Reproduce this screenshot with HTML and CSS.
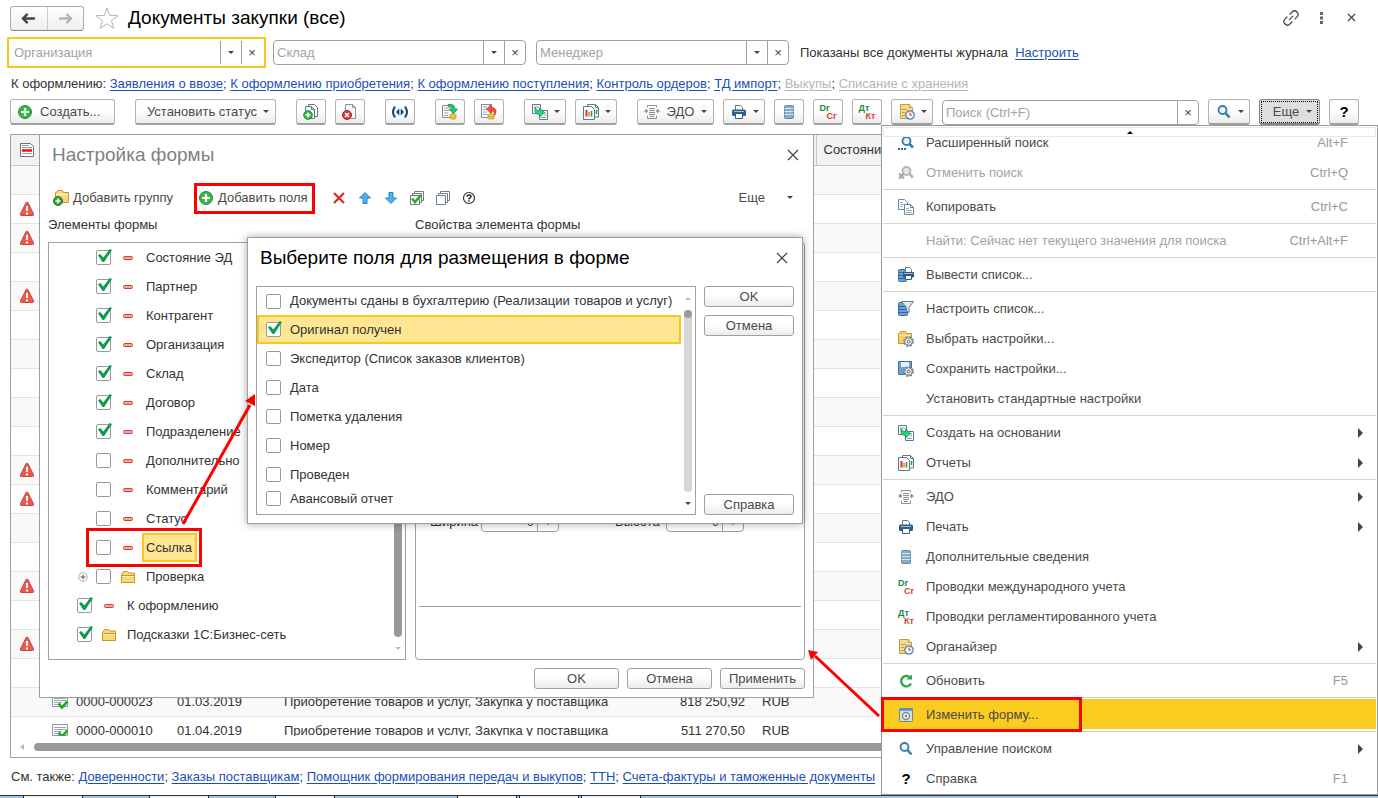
FILE: index.html
```html
<!DOCTYPE html>
<html lang="ru">
<head>
  <meta charset="UTF-8">
  <title>Документы закупки (все)</title>
  <link rel="stylesheet" href="styles.css">
</head>
<body>
  <!-- icons -->
  <svg class="sprite" aria-hidden="true">
    <symbol id="i-add" viewBox="0 0 16 16">
      <circle cx="8" cy="8" r="6.5" fill="#3cb54a" stroke="#23883a"/>
      <path d="M8 4v8M4 8h8" stroke="#fff" stroke-width="2.2"/>
    </symbol>
    <symbol id="i-page-add" viewBox="0 0 16 16">
      <path d="M5.5 .5h6l3 3v9h-9z" fill="#fff" stroke="#60788c"/>
      <path d="M2.5 2.5h6l3 3v9h-9z" fill="#f3f6f8" stroke="#60788c"/>
      <path d="M8.5 2.5v3h3" fill="none" stroke="#60788c"/>
      <circle cx="5" cy="11" r="4.3" fill="#3cb54a" stroke="#23883a"/>
      <path d="M5 8.5v5M2.5 11h5" stroke="#fff" stroke-width="1.5"/>
    </symbol>
    <symbol id="i-page-del" viewBox="0 0 16 16">
      <path d="M3.5 .5h7l3 3v11h-10z" fill="#f6f8fa" stroke="#8796a3"/>
      <path d="M10.5 .5v3h3" fill="none" stroke="#8796a3"/>
      <circle cx="5" cy="11" r="4.5" fill="#d93a3a" stroke="#a82222"/>
      <path d="M3 9l4 4M7 9l-4 4" stroke="#fff" stroke-width="1.5"/>
    </symbol>
    <symbol id="i-code" viewBox="0 0 16 16">
      <path d="M3 2.5Q-1 8 3 13.5M13 2.5Q17 8 13 13.5" fill="none" stroke="#12466e" stroke-width="2"/>
      <path d="M7.3 4.5v7L4 8zM8.7 4.5v7L12 8z" fill="#12466e"/>
    </symbol>
    <symbol id="i-post" viewBox="0 0 16 16">
      <path d="M.5 1.5h10v12H.5z" fill="#fff" stroke="#7d8d9a"/>
      <path d="M2 4h6M2 6.5h6M2 9h4M2 11.5h4" stroke="#8fa1ae"/>
      <path d="M6 .5q7-1 7 4.5h2.5l-4 5-4-5H10q0-2.5-4-2.5z" fill="#27c36e" stroke="#139150" stroke-width=".7"/>
      <path d="M8 10.5q3.5-1.5 6 0v4q-3 1.5-6 0z" fill="#f3cb45" stroke="#c79a1c" stroke-width=".7"/>
      <path d="M8 12.5q3 1.2 6 0" fill="none" stroke="#c79a1c" stroke-width=".7"/>
    </symbol>
    <symbol id="i-unpost" viewBox="0 0 16 16">
      <path d="M.5 .5h10v13H.5z" fill="#fff" stroke="#7d8d9a"/>
      <path d="M2 3h4M2 5.5h4M2 8h4M2 10.5h5" stroke="#8fa1ae"/>
      <path d="M10 .5L5.5 5 10 9.5V7q4-.5 3.5 4.500 4.500-7-3.500-8.500z" fill="#f4523c" stroke="#c4301f" stroke-width=".7"/>
      <path d="M7 10.5q3.5-1.5 6 0v4q-3 1.5-6 0z" fill="#f3cb45" stroke="#c79a1c" stroke-width=".7"/>
      <path d="M7 12.5q3 1.2 6 0" fill="none" stroke="#c79a1c" stroke-width=".7"/>
    </symbol>
    <symbol id="i-based" viewBox="0 0 16 16">
      <path d="M.5 .5h8v9h-8zM7.5 6.5h8v9h-8z" fill="#f7f9fa" stroke="#60788c"/>
      <path d="M2 3h5M12 9h2M12 11h2M9 13.5h5" stroke="#8fa1ae"/>
      <path d="M3 3.5v4q.5 3 4.5 3V13l5-4.5L7.500 4v3Q5 7 3 3.500z" fill="#30d27c" stroke="#139150" stroke-width=".8"/>
    </symbol>
    <symbol id="i-report" viewBox="0 0 16 16">
      <path d="M4.5 .5h8l3 3V13h-11z" fill="#f7f9fa" stroke="#60788c"/>
      <path d="M12.5 .5v3h3" fill="none" stroke="#60788c"/>
      <path d="M.5 2.5h8l3 3v10H.5z" fill="#f7f9fa" stroke="#60788c"/>
      <path d="M3.5 6v6.5" stroke="#d33" stroke-width="2"/>
      <path d="M6 8v4.5" stroke="#e08b2c" stroke-width="1.5"/>
      <path d="M8.5 7v5.5M13.5 6v4" stroke="#2b9a3e" stroke-width="1.5"/>
    </symbol>
    <symbol id="i-edo" viewBox="0 0 16 16">
      <path d="M3.5 3.5v-2h9v2M3.5 11.5v3h9v-3" fill="none" stroke="#909090"/>
      <path d="M5 4.5h6M5 6.5h6M5 8.5h6M5 10.5h6M6 12.5h4" stroke="#909090"/>
      <path d="M4 7H1M12 7h3" stroke="#909090" stroke-width="1.5"/>
      <path d="M3 4.5v5L0 7zM13 4.5v5L16 7z" fill="#909090"/>
    </symbol>
    <symbol id="i-print" viewBox="0 0 16 16">
      <path d="M4.5 6V1.5h5l2 2V6" fill="#fff" stroke="#60788c"/>
      <rect x="1" y="5.5" width="14" height="6.5" rx="1.5" fill="#2f5f88"/>
      <path d="M3 7.5h10" stroke="#9fc0da"/>
      <path d="M4.5 9.5h7v5h-7z" fill="#fff" stroke="#355d7e"/>
    </symbol>
    <symbol id="i-list" viewBox="0 0 16 16">
      <rect x="3.5" y="1.5" width="9" height="13" rx="1" fill="#88abc6" stroke="#688aa6"/>
      <path d="M3.5 4.5h9M3.5 7.5h9M3.5 10.5h9" stroke="#d5e3ee"/>
    </symbol>
    <symbol id="i-org" viewBox="0 0 16 16">
      <path d="M1.5 .5h9l3 3v11h-12z" fill="#f6d98a" stroke="#c29c45"/>
      <path d="M10.5 .5v3h3" fill="#fff0c4" stroke="#c29c45"/>
      <path d="M3 5.5h5M3 8.5h3M3 11.5h3" stroke="#c29c45"/>
      <circle cx="11" cy="11" r="4.2" fill="#edf4fc" stroke="#4f7fb3" stroke-width="1.2"/>
      <path d="M11 8.5V11h2" fill="none" stroke="#d33"/>
    </symbol>
    <symbol id="i-search" viewBox="0 0 16 16">
      <circle cx="6.5" cy="6" r="4" fill="#eef5fa" stroke="#3a7aa8" stroke-width="1.8"/>
      <path d="M9.5 9l4 4.5" stroke="#3a7aa8" stroke-width="2.6"/>
    </symbol>
    <symbol id="i-search-ext" viewBox="0 0 16 16">
      <circle cx="8.5" cy="6" r="4" fill="#eef5fa" stroke="#3a7aa8" stroke-width="1.8"/>
      <path d="M11.5 9l3.5 3.5" stroke="#3a7aa8" stroke-width="2.6"/>
      <path d="M0 14h2M3 14h2M6 14h2" stroke="#2c6c9c" stroke-width="2"/>
    </symbol>
    <symbol id="i-search-off" viewBox="0 0 16 16">
      <circle cx="8.5" cy="6" r="4" fill="#e4e6e8" stroke="#b0b5b9" stroke-width="1.8"/>
      <path d="M11.5 9l3.5 3.5" stroke="#b0b5b9" stroke-width="2.6"/>
      <path d="M1 8.5l5 5M6 8.5l-5 5" stroke="#b7a09c" stroke-width="2.2"/>
    </symbol>
    <symbol id="i-copy" viewBox="0 0 16 16">
      <path d="M.5 .5h6l3 3v7h-9z" fill="#fff" stroke="#708595"/>
      <path d="M2 3.5h3M2 5.5h5M2 7.5h3" stroke="#9cacb8"/>
      <path d="M6.5 5.5h6l3 3v7h-9z" fill="#fff" stroke="#708595"/>
      <path d="M12.5 5.5v3h3" fill="none" stroke="#708595"/>
      <path d="M8 9.5h3M8 11.5h6M8 13.5h6" stroke="#9cacb8"/>
    </symbol>
    <symbol id="i-print-list" viewBox="0 0 16 16">
      <rect x=".5" y="2.5" width="8" height="12" rx="1" fill="#6ba3d6" stroke="#41719b"/>
      <path d="M1 5.5h7M1 8.5h7M1 11.5h7" stroke="#2f679a"/>
      <path d="M7.5 6V.5h4l2 2V6" fill="#fff" stroke="#60788c"/>
      <rect x="5" y="5" width="11" height="5.5" rx="1" fill="#2f5478"/>
      <path d="M6 6.5h9" stroke="#a7c4dc"/>
      <path d="M7.5 8.5h6v4h-6z" fill="#fff" stroke="#355d7e"/>
    </symbol>
    <symbol id="i-filter" viewBox="0 0 16 16">
      <rect x=".5" y="1.5" width="9" height="13" rx="1" fill="#6ba3d6" stroke="#41719b"/>
      <path d="M1 5.5h8M1 8.5h8M1 11.5h8" stroke="#2f679a"/>
      <path d="M3.5 .5h12l-4.500 6v5L8.500 9.500v-3z" fill="#e3e8ec" stroke="#6d7c89"/>
    </symbol>
    <symbol id="i-gear" viewBox="0 0 16 16">
      <circle cx="10.5" cy="10.5" r="4.6" fill="#f4f4f4" stroke="#727b84" stroke-width="1.6" stroke-dasharray="2.2 1.4"/>
      <circle cx="10.5" cy="10.5" r="3.8" fill="#f4f4f4" stroke="#727b84"/>
      <circle cx="10.5" cy="10.5" r="1.5" fill="#fff" stroke="#555e66"/>
    </symbol>
    <symbol id="i-pick-set" viewBox="0 0 16 16">
      <path d="M.5 12.5v-10h1l1-2h5l1 2h5v10z" fill="#f8cf66" stroke="#c9962b"/>
      <path d="M1 4.5h12" stroke="#fde9ad"/>
      <use href="#i-gear" width="16" height="16"/>
    </symbol>
    <symbol id="i-save-set" viewBox="0 0 16 16">
      <path d="M.5 .5h13v13H.5z" fill="#6ba3d6" stroke="#41719b"/>
      <path d="M3 1h8v5H3z" fill="#eaf2f9"/>
      <use href="#i-gear" width="16" height="16"/>
    </symbol>
    <symbol id="i-refresh" viewBox="0 0 16 16">
      <path d="M13 10.5A5.2 5.2 0 1 1 11.5 4" fill="none" stroke="#36a544" stroke-width="2.4"/>
      <path d="M8.5 6.5H14v-5z" fill="#36a544"/>
    </symbol>
    <symbol id="i-form" viewBox="0 0 16 16">
      <rect x="1.5" y="1.5" width="13" height="13" rx="1" fill="#d9dcdf" stroke="#76838e"/>
      <path d="M1 2.5h14" stroke="#4f94d3" stroke-width="2.5"/>
      <circle cx="8" cy="9" r="3.5" fill="#f2f2f2" stroke="#848b92" stroke-width="1.5"/>
      <circle cx="8" cy="9" r="1.2" fill="#6f777f"/>
    </symbol>
    <symbol id="i-folder-add" viewBox="0 0 16 16">
      <path d="M2.5 12.5v-10h1l1-2h5l1 2h5v10z" fill="#f8d880" stroke="#c9962b"/>
      <path d="M3 4.5h12" stroke="#fff0c0"/>
      <circle cx="5" cy="11" r="4.5" fill="#3c9f3c" stroke="#23782a"/>
      <path d="M5 8.5v5M2.5 11h5" stroke="#fff" stroke-width="1.6"/>
    </symbol>
    <symbol id="i-folder" viewBox="0 0 16 16">
      <path d="M1.5 13.5v-8l2-3h4L9 4h5.500v9.500z" fill="#f8d877" stroke="#c9962b"/>
      <path d="M2 6.5h12" stroke="#c9962b"/>
      <path d="M2 7.5h12" stroke="#fff0c0"/>
    </symbol>
    <symbol id="i-minus" viewBox="0 0 16 16">
      <rect x="3.5" y="6.5" width="9" height="3" rx="1" fill="#f6a79b" stroke="#cf4037"/>
    </symbol>
    <symbol id="i-cross" viewBox="0 0 16 16">
      <path d="M3 3l10 10M13 3L3 13" stroke="#d8322c" stroke-width="2.4"/>
    </symbol>
    <symbol id="i-up" viewBox="0 0 16 16">
      <path d="M8 2.5L2.5 8H6v5.5h4V8h3.5z" fill="#4fb2ef" stroke="#2a7fbd"/>
    </symbol>
    <symbol id="i-down" viewBox="0 0 16 16">
      <path d="M8 13.5L2.5 8H6V2.5h4V8h3.5z" fill="#4fb2ef" stroke="#2a7fbd"/>
    </symbol>
    <symbol id="i-stack" viewBox="0 0 16 16">
      <path d="M5.5 1.5h9v9h-9z" fill="#fff" stroke="#6e7f8b"/>
      <path d="M3.5 3.5h9v9h-9z" fill="#fff" stroke="#6e7f8b"/>
      <path d="M1.5 5.5h9v9h-9z" fill="#fff" stroke="#6e7f8b"/>
    </symbol>
    <symbol id="i-stack-check" viewBox="0 0 16 16">
      <use href="#i-stack" width="16" height="16"/>
      <path d="M3 8.5L6 12l6-7" fill="none" stroke="#38a51c" stroke-width="2.6"/>
    </symbol>
    <symbol id="i-warn" viewBox="0 0 16 16">
      <path d="M8 1Q8.600 1 9 1.700L14.600 13q.4 1.500-1 1.500H2.400Q1 14.500 1.400 13L7 1.700Q7.400 1 8 1z" fill="#ec5a4d" stroke="#c94438"/>
      <path d="M8 5v5M8 11.5v2" stroke="#fff" stroke-width="2"/>
    </symbol>
    <symbol id="i-doc-red" viewBox="0 0 16 16">
      <path d="M1.5 1.5h10l3 3v10h-13z" fill="#fff" stroke="#60788c"/>
      <path d="M3 3.5h7M3 5.5h10M3 11.5h10" stroke="#8fa1ae"/>
      <path d="M3 8.5h10" stroke="#f00" stroke-width="2.4"/>
    </symbol>
    <symbol id="i-doc-ok" viewBox="0 0 16 16">
      <path d="M.5 1.5h15v11H.5z" fill="#fff" stroke="#8b9aa6"/>
      <path d="M2 4.5h12M2 6.5h12M2 8.5h8M2 10.5h5" stroke="#9aa8b3"/>
      <path d="M6.5 9.5l3.5 4 5.500-6" fill="none" stroke="#2aa52a" stroke-width="2.8"/>
    </symbol>
    <symbol id="i-x" viewBox="0 0 16 16">
      <path d="M3 3l10 10M13 3L3 13" stroke="#444" stroke-width="1.2"/>
    </symbol>
    <symbol id="i-link" viewBox="0 0 16 16">
      <g transform="rotate(-45 8 8)" fill="none" stroke="#444" stroke-width="1.2">
        <path d="M6.5 4.5H3a3.5 3.5 0 0 0 0 7h3.500"/>
        <path d="M9.5 4.5H13a3.5 3.5 0 0 1 0 7H9.500M5 8h6"/>
      </g>
    </symbol>
    <symbol id="i-help" viewBox="0 0 16 16">
      <circle cx="8" cy="8" r="5.5" fill="#fff" stroke="#333" stroke-width="1.2"/>
      <path d="M6 6.800Q6 5 8 5t2 1.700Q10 7.500 8 8.700V9.500M8 10.300v1.400" fill="none" stroke="#222" stroke-width="1.4"/>
    </symbol>
    <symbol id="i-expand" viewBox="0 0 10 10">
      <circle cx="5" cy="5" r="4.3" fill="#fff" stroke="#999" stroke-width=".8"/>
      <path d="M5 2.5v5M2.5 5h5" stroke="#555"/>
    </symbol>
  </svg>

  <header class="head">
    <div class="nav-buttons">
      <button aria-label="Назад"><svg viewBox="0 0 16 12"><path d="M7 1L2 6l5 5M2 6h13" fill="none" stroke="#444" stroke-width="2.6"/></svg></button>
      <button aria-label="Вперед"><svg viewBox="0 0 16 12"><path d="M9 1l5 5-5 5M14 6H1" fill="none" stroke="#b5b5b5" stroke-width="2.6"/></svg></button>
    </div>
    <svg class="star" viewBox="0 0 24 22"><path d="M12 1l2.700 7.500 8.300.2-6.500 5 2.300 7.600L12 16.800l-6.800 4.500 2.300-7.600-6.500-5 8.300-.2z" fill="#fff" stroke="#b0b5ba"/></svg>
    <h1>Документы закупки (все)</h1>
    <div class="window-tools">
      <button aria-label="Ссылка"><svg class="icon"><use href="#i-link"/></svg></button>
      <button aria-label="Меню"><svg class="icon" viewBox="0 0 16 16"><path d="M7 2h3v3H7zM7 6.500h3v3H7zM7 11h3v3H7z" fill="#666"/></svg></button>
      <button aria-label="Закрыть"><svg class="icon" viewBox="0 0 16 16"><path d="M5 4l7 7M12 4l-7 7" stroke="#444" stroke-width="1.2"/></svg></button>
    </div>
  </header>

  <div class="filters">
    <div class="combo focused">
      <input type="text" placeholder="Организация" aria-label="Организация">
      <button aria-label="Выбрать"><i class="caret"></i></button>
      <button aria-label="Очистить">×</button>
    </div>
    <div class="combo">
      <input type="text" placeholder="Склад" aria-label="Склад">
      <button aria-label="Выбрать"><i class="caret"></i></button>
      <button aria-label="Очистить">×</button>
    </div>
    <div class="combo">
      <input type="text" placeholder="Менеджер" aria-label="Менеджер">
      <button aria-label="Выбрать"><i class="caret"></i></button>
      <button aria-label="Очистить">×</button>
    </div>
    <span class="filter-info">Показаны все документы журнала&nbsp; <a href="#">Настроить</a></span>
  </div>

  <p class="links">К оформлению: <a href="#">Заявления о ввозе</a>; <a href="#">К оформлению приобретения</a>; <a href="#">К оформлению поступления</a>; <a href="#">Контроль ордеров</a>; <a href="#">ТД импорт</a>; <a href="#" class="muted">Выкупы</a>; <a href="#" class="muted">Списание с хранения</a></p>

  <div class="toolbar">
    <button class="btn create"><svg class="icon"><use href="#i-add"/></svg>Создать...</button>
    <button class="btn status group">Установить статус<i class="caret"></i></button>
    <button class="btn square group" aria-label="Скопировать"><svg class="icon"><use href="#i-page-add"/></svg></button>
    <button class="btn square" aria-label="Удалить"><svg class="icon"><use href="#i-page-del"/></svg></button>
    <button class="btn square group" aria-label="Обмен"><svg class="icon"><use href="#i-code"/></svg></button>
    <button class="btn square group" aria-label="Провести"><svg class="icon"><use href="#i-post"/></svg></button>
    <button class="btn square" aria-label="Отмена проведения"><svg class="icon"><use href="#i-unpost"/></svg></button>
    <button class="btn drop group" aria-label="Создать на основании"><svg class="icon"><use href="#i-based"/></svg><i class="caret"></i></button>
    <button class="btn drop" aria-label="Отчеты"><svg class="icon"><use href="#i-report"/></svg><i class="caret"></i></button>
    <button class="btn edo group"><svg class="icon"><use href="#i-edo"/></svg>ЭДО<i class="caret"></i></button>
    <button class="btn drop" aria-label="Печать"><svg class="icon"><use href="#i-print"/></svg><i class="caret"></i></button>
    <button class="btn square" aria-label="Дополнительные сведения"><svg class="icon"><use href="#i-list"/></svg></button>
    <button class="btn square"><span class="pair"><b>Dr</b><b>Cr</b></span></button>
    <button class="btn square"><span class="pair"><b>Дт</b><b>Кт</b></span></button>
    <button class="btn drop" aria-label="Органайзер"><svg class="icon"><use href="#i-org"/></svg><i class="caret"></i></button>
    <div class="combo search">
      <input type="text" placeholder="Поиск (Ctrl+F)" aria-label="Поиск">
      <button aria-label="Очистить">×</button>
    </div>
    <button class="btn drop" aria-label="Управление поиском"><svg class="icon"><use href="#i-search"/></svg><i class="caret"></i></button>
    <button class="btn more">Еще<i class="caret"></i></button>
    <button class="btn square help">?</button>
  </div>

  <main class="journal">
    <div class="rows">
      <table>
        <colgroup>
          <col class="c-flag"><col class="c-icon"><col class="c-num"><col class="c-date"><col class="c-type"><col class="c-sum"><col class="c-cur"><col>
        </colgroup>
        <thead>
          <tr><th><svg class="icon"><use href="#i-doc-red"/></svg></th><th></th><th></th><th></th><th></th><th></th><th></th><th>Состояние</th></tr>
        </thead>
        <tbody>
          <tr><td></td><td colspan="7"></td></tr>
          <tr><td><svg class="icon"><use href="#i-warn"/></svg></td><td colspan="7"></td></tr>
          <tr><td><svg class="icon"><use href="#i-warn"/></svg></td><td colspan="7"></td></tr>
          <tr><td></td><td colspan="7"></td></tr>
          <tr><td><svg class="icon"><use href="#i-warn"/></svg></td><td colspan="7"></td></tr>
          <tr><td></td><td colspan="7"></td></tr>
          <tr><td></td><td colspan="7"></td></tr>
          <tr><td></td><td colspan="7"></td></tr>
          <tr><td></td><td colspan="7"></td></tr>
          <tr><td></td><td colspan="7"></td></tr>
          <tr><td><svg class="icon"><use href="#i-warn"/></svg></td><td colspan="7"></td></tr>
          <tr><td><svg class="icon"><use href="#i-warn"/></svg></td><td colspan="7"></td></tr>
          <tr><td></td><td colspan="7"></td></tr>
          <tr><td></td><td colspan="7"></td></tr>
          <tr><td><svg class="icon"><use href="#i-warn"/></svg></td><td colspan="7"></td></tr>
          <tr><td></td><td colspan="7"></td></tr>
          <tr><td><svg class="icon"><use href="#i-warn"/></svg></td><td colspan="7"></td></tr>
          <tr><td></td><td colspan="7"></td></tr>
          <tr class="doc"><td></td><td><svg class="icon"><use href="#i-doc-ok"/></svg></td><td>0000-000023</td><td>01.03.2019</td><td>Приобретение товаров и услуг, Закупка у поставщика</td><td class="sum">818 250,92</td><td>RUB</td><td></td></tr>
          <tr class="doc"><td></td><td><svg class="icon"><use href="#i-doc-ok"/></svg></td><td>0000-000010</td><td>01.04.2019</td><td>Приобретение товаров и услуг, Закупка у поставщика</td><td class="sum">511 270,50</td><td>RUB</td><td></td></tr>
        </tbody>
      </table>
    </div>
    <div class="hscroll"><i class="tri-left"></i><span></span></div>
  </main>

  <p class="links see-also">См. также: <a href="#">Доверенности</a>; <a href="#">Заказы поставщикам</a>; <a href="#">Помощник формирования передач и выкупов</a>; <a href="#">ТТН</a>; <a href="#">Счета-фактуры и таможенные документы</a></p>

  <div class="taskbar"><span></span><span></span><span></span><span></span><span></span><span></span></div>

  <!-- form settings -->
  <section class="dialog form-dialog">
    <div class="dialog-head">
      <h2>Настройка формы</h2>
      <button class="close" aria-label="Закрыть"><svg class="icon"><use href="#i-x"/></svg></button>
    </div>
    <div class="dialog-tools">
      <button class="tool"><svg class="icon"><use href="#i-folder-add"/></svg>Добавить группу</button>
      <button class="tool framed"><svg class="icon"><use href="#i-add"/></svg>Добавить поля</button>
      <button class="tool" aria-label="Удалить"><svg class="icon"><use href="#i-cross"/></svg></button>
      <button class="tool" aria-label="Вверх"><svg class="icon"><use href="#i-up"/></svg></button>
      <button class="tool" aria-label="Вниз"><svg class="icon"><use href="#i-down"/></svg></button>
      <button class="tool" aria-label="Установить флажки"><svg class="icon"><use href="#i-stack-check"/></svg></button>
      <button class="tool" aria-label="Снять флажки"><svg class="icon"><use href="#i-stack"/></svg></button>
      <button class="tool" aria-label="Справка"><svg class="icon"><use href="#i-help"/></svg></button>
      <button class="tool tool-more">Еще<i class="caret"></i></button>
    </div>
    <div class="panels">
      <div class="panel">
        <h3>Элементы формы</h3>
        <div class="tree">
          <div class="tree-rows">
            <label class="node"><input type="checkbox" checked><svg class="icon"><use href="#i-minus"/></svg><span>Состояние ЭД</span></label>
            <label class="node"><input type="checkbox" checked><svg class="icon"><use href="#i-minus"/></svg><span>Партнер</span></label>
            <label class="node"><input type="checkbox" checked><svg class="icon"><use href="#i-minus"/></svg><span>Контрагент</span></label>
            <label class="node"><input type="checkbox" checked><svg class="icon"><use href="#i-minus"/></svg><span>Организация</span></label>
            <label class="node"><input type="checkbox" checked><svg class="icon"><use href="#i-minus"/></svg><span>Склад</span></label>
            <label class="node"><input type="checkbox" checked><svg class="icon"><use href="#i-minus"/></svg><span>Договор</span></label>
            <label class="node"><input type="checkbox" checked><svg class="icon"><use href="#i-minus"/></svg><span>Подразделение</span></label>
            <label class="node"><input type="checkbox"><svg class="icon"><use href="#i-minus"/></svg><span>Дополнительно</span></label>
            <label class="node"><input type="checkbox"><svg class="icon"><use href="#i-minus"/></svg><span>Комментарий</span></label>
            <label class="node"><input type="checkbox"><svg class="icon"><use href="#i-minus"/></svg><span>Статус</span></label>
            <label class="node current"><input type="checkbox"><svg class="icon"><use href="#i-minus"/></svg><span>Ссылка</span></label>
            <label class="node parent"><svg class="expander"><use href="#i-expand"/></svg><input type="checkbox"><svg class="icon"><use href="#i-folder"/></svg><span>Проверка</span></label>
            <label class="node top"><input type="checkbox" checked><svg class="icon"><use href="#i-minus"/></svg><span>К оформлению</span></label>
            <label class="node top"><input type="checkbox" checked><svg class="icon"><use href="#i-folder"/></svg><span>Подсказки 1С:Бизнес-сеть</span></label>
          </div>
          <div class="vscroll"><span class="thumb"></span><i class="caret pale"></i></div>
        </div>
      </div>
      <div class="panel wide">
        <h3>Свойства элемента формы</h3>
        <div class="props">
          <div class="sizes">
            <label for="w">Ширина</label>
            <div class="combo spin"><input type="text" id="w" value="0"><button aria-label="Изменить ширину"><i class="caret"></i></button></div>
            <label for="h">Высота</label>
            <div class="combo spin"><input type="text" id="h" value="0"><button aria-label="Изменить высоту"><i class="caret"></i></button></div>
          </div>
          <hr>
        </div>
      </div>
    </div>
    <div class="dialog-foot">
      <button class="btn flat">OK</button>
      <button class="btn flat">Отмена</button>
      <button class="btn flat">Применить</button>
    </div>
  </section>

  <!-- field picker -->
  <section class="dialog fields-dialog">
    <div class="dialog-head">
      <h2>Выберите поля для размещения в форме</h2>
      <button class="close" aria-label="Закрыть"><svg class="icon"><use href="#i-x"/></svg></button>
    </div>
    <div class="picker">
      <div class="field-list">
        <div class="fields">
          <label class="first"><input type="checkbox"><span>Документы сданы в бухгалтерию (Реализации товаров и услуг)</span></label>
          <label class="active"><input type="checkbox" checked><span>Оригинал получен</span></label>
          <label><input type="checkbox"><span>Экспедитор (Список заказов клиентов)</span></label>
          <label><input type="checkbox"><span>Дата</span></label>
          <label><input type="checkbox"><span>Пометка удаления</span></label>
          <label><input type="checkbox"><span>Номер</span></label>
          <label><input type="checkbox"><span>Проведен</span></label>
          <label class="last"><input type="checkbox"><span>Авансовый отчет</span></label>
        </div>
        <div class="vscroll track"><i class="caret up pale"></i><span class="rail"><span class="dot"></span></span><i class="caret"></i></div>
      </div>
      <div class="picker-buttons">
        <button class="btn flat">OK</button>
        <button class="btn flat">Отмена</button>
        <button class="btn flat bottom">Справка</button>
      </div>
    </div>
  </section>

  <!-- "More" menu -->
  <nav class="menu">
    <div class="menu-up"><i class="caret up"></i></div>
    <ul>
      <li><button><svg class="icon"><use href="#i-search-ext"/></svg>Расширенный поиск<kbd>Alt+F</kbd></button></li>
      <li><button disabled><svg class="icon"><use href="#i-search-off"/></svg>Отменить поиск<kbd>Ctrl+Q</kbd></button></li>
      <li class="sep"><button><svg class="icon"><use href="#i-copy"/></svg>Копировать<kbd>Ctrl+C</kbd></button></li>
      <li class="sep"><button disabled><i class="icon"></i>Найти: Сейчас нет текущего значения для поиска<kbd>Ctrl+Alt+F</kbd></button></li>
      <li class="sep"><button><svg class="icon"><use href="#i-print-list"/></svg>Вывести список...</button></li>
      <li class="sep"><button><svg class="icon"><use href="#i-filter"/></svg>Настроить список...</button></li>
      <li><button><svg class="icon"><use href="#i-pick-set"/></svg>Выбрать настройки...</button></li>
      <li><button><svg class="icon"><use href="#i-save-set"/></svg>Сохранить настройки...</button></li>
      <li><button><i class="icon"></i>Установить стандартные настройки</button></li>
      <li class="sep"><button class="sub"><svg class="icon"><use href="#i-based"/></svg>Создать на основании</button></li>
      <li><button class="sub"><svg class="icon"><use href="#i-report"/></svg>Отчеты</button></li>
      <li class="sep"><button class="sub"><svg class="icon"><use href="#i-edo"/></svg>ЭДО</button></li>
      <li><button class="sub"><svg class="icon"><use href="#i-print"/></svg>Печать</button></li>
      <li><button><svg class="icon"><use href="#i-list"/></svg>Дополнительные сведения</button></li>
      <li><button><span class="pair"><b>Dr</b><b>Cr</b></span>Проводки международного учета</button></li>
      <li><button><span class="pair"><b>Дт</b><b>Кт</b></span>Проводки регламентированного учета</button></li>
      <li><button class="sub"><svg class="icon"><use href="#i-org"/></svg>Органайзер</button></li>
      <li class="sep"><button><svg class="icon"><use href="#i-refresh"/></svg>Обновить<kbd>F5</kbd></button></li>
      <li class="sep"><button class="selected"><svg class="icon"><use href="#i-form"/></svg>Изменить форму...</button></li>
      <li class="sep"><button class="sub"><svg class="icon"><use href="#i-search"/></svg>Управление поиском</button></li>
      <li><button><b class="icon question">?</b>Справка<kbd>F1</kbd></button></li>
    </ul>
  </nav>

  <!-- callout arrows -->
  <svg class="arrow arrow-fields" viewBox="0 0 76 134"><path d="M2 131L69 12" stroke="#f00" stroke-width="3"/><path d="M74 1v12l-10-5z" fill="#f00"/></svg>
  <svg class="arrow arrow-form" viewBox="0 0 74 70"><path d="M72 67L8 7" stroke="#f00" stroke-width="3"/><path d="M1 1l10 2-7 8z" fill="#f00"/></svg>
</body>
</html>
```
FILE: styles.css
```css
*,
*::before,
*::after {
  box-sizing: border-box;
}

body {
  position: relative;
  display: flex;
  flex-direction: column;
  height: 100vh;
  margin: 0;
  overflow: hidden;
  background: #fff;
  color: #333;
  font: 13px/16px "Liberation Sans", Arial, sans-serif;
}

button,
input {
  margin: 0;
  padding: 0;
  border: none;
  background: none;
  color: inherit;
  font: inherit;
}

h1,
h2,
h3,
p,
ul {
  margin: 0;
  padding: 0;
  font-weight: normal;
}

a {
  color: #1a4fb8;
  text-underline-offset: 2px;
}

a.muted {
  color: #b5b5b5;
}

.sprite {
  position: absolute;
  width: 0;
  height: 0;
}

.icon {
  display: block;
  flex: none;
  width: 16px;
  height: 16px;
}

.caret {
  flex: none;
  width: 0;
  height: 0;
  border: 3px solid transparent;
  border-top-color: #444;
  border-bottom: none;
}

.caret.up {
  border-top: none;
  border-bottom: 3px solid #000;
}

.caret.pale {
  border-top-color: #bbb;
  border-bottom-color: #bbb;
}

/* header */
.head {
  display: flex;
  align-items: center;
  height: 36px;
  padding: 0 19px 0 10px;
}

.nav-buttons {
  display: flex;
  width: 74px;
  height: 25px;
  border: 1px solid #b0b0b0;
  border-bottom-color: #888;
  border-radius: 3px;
  background: linear-gradient(#fff, #eee);
}

.nav-buttons button {
  display: flex;
  flex: 1;
  align-items: center;
  justify-content: center;
}

.nav-buttons button + button {
  border-left: 1px solid #ccc;
}

.nav-buttons svg {
  width: 15px;
  height: 11px;
}

.star {
  width: 24px;
  height: 22px;
  margin: 0 9px 0 11px;
}

h1 {
  color: #000;
  font-size: 19px;
  line-height: 24px;
}

.window-tools {
  display: flex;
  gap: 14px;
  margin-left: auto;
}

/* filters */
.filters {
  display: flex;
  align-items: center;
  gap: 10px;
  padding: 4px 10px 0;
}

.combo {
  display: flex;
  width: 253px;
  height: 25px;
  border: 1px solid #a0a0a0;
  border-radius: 4px;
  background: #fff;
}

.combo input {
  flex: 1;
  min-width: 0;
  padding: 0 3px;
  outline: none;
}

.combo input::placeholder {
  color: #a3a3a3;
}

.combo button {
  display: flex;
  align-items: center;
  justify-content: center;
  width: 21px;
  border-left: 1px solid #a0a0a0;
  color: #444;
}

.combo.focused {
  border-color: transparent;
  border-radius: 0;
  outline: 2px solid #f9c81e;
  outline-offset: 1px;
}

.filter-info {
  margin-left: 1px;
}

.links {
  padding: 11px 11px 7px;
}

/* toolbar */
.toolbar {
  display: flex;
  gap: 9px;
  padding: 0 19px 0 10px;
}

.btn {
  display: flex;
  align-items: center;
  justify-content: center;
  height: 26px;
  border: 1px solid #b3b3b3;
  border-bottom: 2px solid #a0a0a0;
  border-radius: 3px;
  background: linear-gradient(#fff 40%, #ececec);
  color: #4a4a4a;
}

.btn.flat {
  height: 21px;
  border: 1px solid #a0a0a0;
}

.btn.group {
  margin-left: 11px;
}

.btn.create {
  gap: 7px;
  width: 105px;
  justify-content: flex-start;
  padding-left: 6px;
}

.btn.status {
  gap: 6px;
  width: 141px;
  justify-content: flex-end;
  padding-right: 6px;
}

.btn.square {
  width: 30px;
}

.btn.drop {
  gap: 6px;
  width: 42px;
  padding-left: 2px;
}

.btn.edo {
  gap: 7px;
  width: 77px;
}

.btn.more {
  gap: 7px;
  width: 61px;
  padding-left: 6px;
  border-color: #888;
  background: #dedede;
  outline: 1px dotted #000;
  outline-offset: -3px;
}

.btn.help,
.question {
  color: #000;
  font-size: 15px;
  font-weight: bold;
  text-align: center;
}

.combo.search {
  flex: 1;
  width: auto;
  margin-top: 1px;
}

/* debit / credit mark */
.pair {
  display: flex;
  flex: none;
  flex-direction: column;
  width: 17px;
  font-size: 9px;
  line-height: 8px;
  text-align: left;
}

.pair b:first-child {
  color: #178a45;
}

.pair b:last-child {
  align-self: flex-end;
  color: #d8413c;
}

/* journal */
.journal {
  display: flex;
  flex: 1;
  flex-direction: column;
  min-height: 0;
  margin: 9px 10px 0;
  border: 1px solid #a0a0a0;
}

.rows {
  flex: 1;
  overflow: hidden;
}

table {
  width: 100%;
  border-collapse: collapse;
  table-layout: fixed;
}

.c-flag { width: 28px; }
.c-icon { width: 34px; }
.c-num { width: 101px; }
.c-date { width: 107px; }
.c-type { width: 357px; }
.c-sum { width: 112px; }
.c-cur { width: 66px; }

th {
  height: 30px;
  padding: 0 7px;
  border-right: 1px solid #c8c8c8;
  border-bottom: 1px solid #c8c8c8;
  background: #f2f2f2;
  font-weight: normal;
  text-align: left;
}

td {
  height: 29px;
  padding: 0 3px;
  border-bottom: 1px solid #e3e3e3;
  white-space: nowrap;
}

th:first-child,
td:first-child {
  padding: 0 0 0 8px;
}

.doc td {
  padding-top: 1px;
}

td:nth-child(2) {
  padding-left: 13px;
}

tbody tr:nth-child(odd) {
  background: #f9f9f9;
}

.sum {
  padding-right: 5px;
  text-align: right;
}

.sum + td {
  padding-left: 12px;
}

.hscroll {
  display: flex;
  align-items: center;
  gap: 10px;
  height: 21px;
  padding-left: 9px;
}

.hscroll span {
  flex: 1;
  height: 8px;
  border-radius: 4px;
  background: #999;
}

.tri-left {
  border: 3px solid transparent;
  border-left: none;
  border-right: 4px solid #bbb;
}

.links.see-also {
  padding: 11px 11px 10px;
}

.taskbar {
  display: flex;
  gap: 2px;
  height: 3px;
  padding-left: 23px;
  border-top: 1px solid #333;
  background: #a9c3dd;
}

.taskbar span {
  width: 60px;
  border: solid #222;
  border-width: 0 1px;
  background: #eef3fa;
}

.taskbar span:nth-child(2),
.taskbar span:nth-child(3) {
  margin-left: 64px;
}

.taskbar span:nth-child(4) {
  margin-left: 120px;
}

/* dialogs */
.dialog {
  position: absolute;
  display: flex;
  flex-direction: column;
  border: 1px solid #a0a0a0;
  background: #fff;
}

.dialog h2 {
  font-size: 19px;
  line-height: 24px;
}

.dialog-head {
  display: flex;
  align-items: center;
  justify-content: space-between;
  padding: 8px 12px 10px;
}

input[type="checkbox"] {
  position: relative;
  flex: none;
  width: 15px;
  height: 15px;
  border: 1px solid #999;
  border-radius: 2px;
  background: #fff;
  appearance: none;
}

input[type="checkbox"]:checked::after {
  content: "";
  position: absolute;
  top: -2px;
  left: 1px;
  width: 14px;
  height: 13px;
  background: #0f9a4c;
  clip-path: polygon(0 48%, 16% 38%, 38% 66%, 84% 0, 100% 8%, 44% 100%, 32% 100%);
}

.form-dialog {
  top: 134px;
  left: 39px;
  width: 775px;
  height: 564px;
}

.form-dialog h2 {
  color: #808080;
}

.dialog-tools {
  display: flex;
  align-items: center;
  gap: 10px;
  height: 31px;
  margin-top: 6px;
  padding: 0 20px 0 13px;
}

.tool {
  display: flex;
  align-items: center;
  gap: 4px;
  padding-bottom: 2px;
  color: #4a4a4a;
}

.tool.framed {
  height: 31px;
  margin: 0 6px 0 11px;
  padding: 0 4px 2px 1px;
  border: 3px solid #f00;
}

.tool-more {
  gap: 22px;
  margin-left: auto;
}

.panels {
  display: flex;
  flex: 1;
  gap: 9px;
  padding: 3px 8px 0;
}

.panel {
  display: flex;
  flex-direction: column;
  width: 358px;
}

.panel.wide {
  flex: 1;
}

.panel h3 {
  padding-bottom: 9px;
  font-size: 13px;
  line-height: 16px;
}

.tree {
  display: flex;
  flex: 1;
  border: 1px solid #a0a0a0;
}

.tree-rows {
  flex: 1;
}

.node {
  position: relative;
  display: flex;
  align-items: center;
  height: 29px;
  padding-left: 47px;
}

.node.parent {
  padding-left: 29px;
}

.node.top {
  padding-left: 28px;
}

.node .icon {
  margin: 0 6px 0 9px;
}

.node span {
  padding: 5px 3px 4px 2px;
  border: 2px solid transparent;
}

.node.current span {
  border-color: #f9c81e;
  background: #fee693;
}

.node.current::before {
  content: "";
  position: absolute;
  top: -5px;
  left: 37px;
  width: 116px;
  height: 39px;
  border: 3px solid #f00;
}

.expander {
  width: 10px;
  height: 10px;
  margin-right: 8px;
}

.vscroll {
  display: flex;
  flex-direction: column;
  align-items: center;
  gap: 10px;
  width: 8px;
  margin-right: 3px;
  padding-bottom: 9px;
}

.thumb {
  flex: 1;
  width: 8px;
  border-radius: 4px;
  background: #999;
}

.props {
  flex: 1;
  padding: 264px 3px 0;
  border: 1px solid #a0a0a0;
  border-radius: 4px;
}

.sizes {
  display: flex;
  align-items: center;
  padding-left: 11px;
}

.sizes label {
  width: 51px;
  padding-top: 4px;
}

.spin {
  width: 78px;
}

.spin input {
  padding-top: 4px;
  text-align: right;
}

.spin button {
  padding-top: 8px;
}

.spin + label {
  margin-left: 56px;
}

hr {
  height: 1px;
  margin: 74px 0 0;
  border: none;
  background: #a0a0a0;
}

.dialog-foot {
  display: flex;
  justify-content: flex-end;
  gap: 8px;
  padding: 8px;
}

.dialog-foot .btn {
  width: 85px;
}

.fields-dialog {
  top: 237px;
  left: 247px;
  width: 556px;
  height: 287px;
  box-shadow: 0 0 8px rgba(0, 0, 0, 0.35);
}

.fields-dialog h2 {
  color: #000;
}

.picker {
  display: flex;
  flex: 1;
  gap: 8px;
  padding: 6px 8px 8px;
}

.field-list {
  display: flex;
  flex: 1;
  border: 1px solid #a0a0a0;
}

.fields {
  flex: 1;
}

.fields label {
  display: flex;
  align-items: center;
  gap: 9px;
  height: 29px;
  padding-left: 7px;
  border: 2px solid transparent;
  white-space: nowrap;
}

.fields label.first {
  height: 28px;
}

.fields label.active {
  border-color: #f9c81e;
  background: #fee693;
}

.fields label.last {
  height: 19px;
}

.vscroll.track {
  gap: 10px;
  margin-left: 3px;
  padding-top: 10px;
}

.rail {
  flex: 1;
  width: 8px;
  border-radius: 4px;
  background: #d6d6d6;
}

.dot {
  display: block;
  height: 8px;
  border-radius: 4px;
  background: #999;
}

.picker-buttons {
  display: flex;
  flex-direction: column;
  gap: 8px;
  width: 90px;
}

.picker-buttons .bottom {
  margin-top: auto;
}

/* menu */
.menu {
  position: absolute;
  top: 125px;
  right: 0;
  width: 497px;
  padding: 1px;
  border: 1px solid #999;
  background: #fff;
}

.menu-up {
  position: absolute;
  z-index: 1;
  top: 1px;
  right: 1px;
  left: 1px;
  display: flex;
  align-items: center;
  justify-content: center;
  height: 10px;
  border: 1px solid #e8e8e8;
  background: #fff;
}

.menu ul {
  list-style: none;
}

.menu li.sep {
  padding-top: 4px;
  background: linear-gradient(#d5d3c4, #d5d3c4) 0 2px / 100% 1px no-repeat;
}

.menu button {
  position: relative;
  display: flex;
  align-items: center;
  gap: 12px;
  width: 100%;
  height: 30px;
  padding: 1px 28px 0 15px;
  color: #4a4a4a;
  text-align: left;
}

.menu button:disabled {
  color: #a3a3a3;
}

.menu .pair {
  width: 16px;
}

.menu kbd {
  margin-left: auto;
  color: #999;
  font: inherit;
}

.menu .sub::after {
  content: "";
  margin: 0 -15px 0 auto;
  border: 5px solid transparent;
  border-right: none;
  border-left-color: #444;
}

.menu .selected {
  background: #facc20;
}

.menu .selected::before {
  content: "";
  position: absolute;
  top: -2px;
  left: -2px;
  width: 201px;
  height: 35px;
  border: 3px solid #f00;
}

.arrow {
  position: absolute;
}

.arrow-fields {
  top: 393px;
  left: 181px;
  width: 76px;
  height: 134px;
}

.arrow-form {
  top: 649px;
  left: 807px;
  width: 74px;
  height: 70px;
}
```
